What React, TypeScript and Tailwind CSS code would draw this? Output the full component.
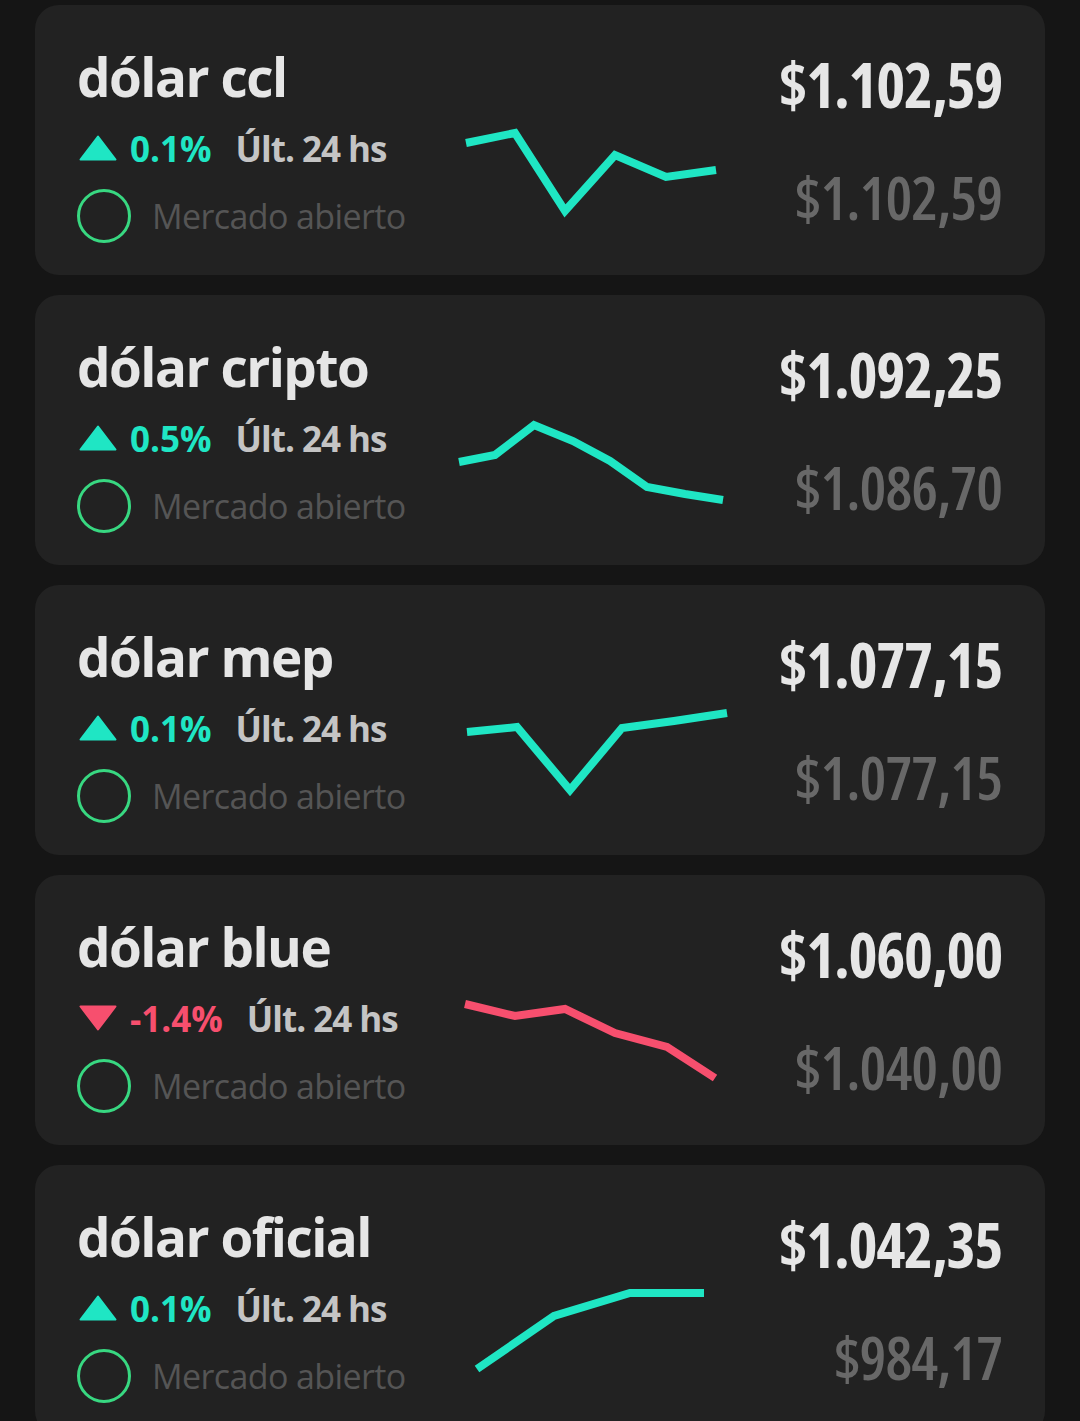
type Quote = {
  name: string;
  change: string;
  up: boolean;
  price: string;
  prev: string;
  points: string;
};

const quotes: Quote[] = [
  {
    name: "dólar ccl",
    change: "0.1%",
    up: true,
    price: "$1.102,59",
    prev: "$1.102,59",
    points: "26,138 75,128 125,206 175,150 226,172 276,165",
  },
  {
    name: "dólar cripto",
    change: "0.5%",
    up: true,
    price: "$1.092,25",
    prev: "$1.086,70",
    points: "19,167 55,160 94,130 133,146 170,166 207,192 245,199 283,205",
  },
  {
    name: "dólar mep",
    change: "0.1%",
    up: true,
    price: "$1.077,15",
    prev: "$1.077,15",
    points: "27,147 77,142 130,205 182,143 234,136 287,128",
  },
  {
    name: "dólar blue",
    change: "-1.4%",
    up: false,
    price: "$1.060,00",
    prev: "$1.040,00",
    points: "25,129 75,141 125,134 175,158 227,172 275,203",
  },
  {
    name: "dólar oficial",
    change: "0.1%",
    up: true,
    price: "$1.042,35",
    prev: "$984,17",
    points: "37,204 114,151 190,128 264,128",
  },
];

const font = "font-['Open_Sans','Noto_Sans',sans-serif]";

function QuoteCard({ q }: { q: Quote }) {
  const color = q.up ? "#1fe6c4" : "#f74f6e";

  return (
    <div className={`flex h-[270px] shrink-0 rounded-[24px] bg-[#222222] ${font}`}>
      <div className="flex w-[405px] shrink-0 flex-col whitespace-nowrap pl-[42px]">
        <h2 className="mt-[45px] text-[53px] font-bold leading-none tracking-[-1.5px] text-[#e6e6e6]">
          {q.name}
        </h2>
        <div className="mt-[27px] flex h-[36px] items-center leading-none">
          <svg width="38" height="26" viewBox="0 0 38 26" className="ml-[2px] mr-[13px] shrink-0">
            {q.up ? (
              <path d="M19 1.5 L36.5 24.5 L1.5 24.5 Z" fill={color} strokeLinejoin="round" stroke={color} strokeWidth="2" />
            ) : (
              <path d="M1.5 1.5 L36.5 1.5 L19 24.5 Z" fill={color} strokeLinejoin="round" stroke={color} strokeWidth="2" />
            )}
          </svg>
          <span className="text-[35px] font-bold tracking-[0px]" style={{ color }}>
            {q.change}
          </span>
          <span className="ml-[24px] text-[35px] font-bold tracking-[-1px] text-[#c4c4c4]">Últ. 24 hs</span>
        </div>
        <div className="mt-[23px] flex items-center">
          <div className="h-[54px] w-[54px] shrink-0 rounded-full border-[3px] border-[#38d881]" />
          <span className="ml-[21px] text-[34px] leading-none tracking-[-0.6px] text-[#555555]">
            Mercado abierto
          </span>
        </div>
      </div>

      <svg width="300" height="270" viewBox="0 0 300 270" className="shrink-0">
        <polyline
          points={q.points}
          fill="none"
          stroke={color}
          strokeWidth="8"
          strokeLinejoin="miter"
        />
      </svg>

      <div className="flex flex-1 flex-col items-end pr-[43px] [font-stretch:75%]">
        <div className="mt-[48px] text-[62px] font-bold leading-none tracking-[-1.3px] text-[#e6e6e6]">
          {q.price}
        </div>
        <div className="mt-[52px] text-[60px] font-semibold leading-none tracking-[-1px] text-[#686868]">
          {q.prev}
        </div>
      </div>
    </div>
  );
}

export default function App() {
  return (
    <div className="h-[1421px] overflow-hidden bg-[#151515]">
      <div className="flex flex-col gap-[20px] px-[35px] pt-[5px]">
        {quotes.map((q) => (
          <QuoteCard key={q.name} q={q} />
        ))}
      </div>
    </div>
  );
}
